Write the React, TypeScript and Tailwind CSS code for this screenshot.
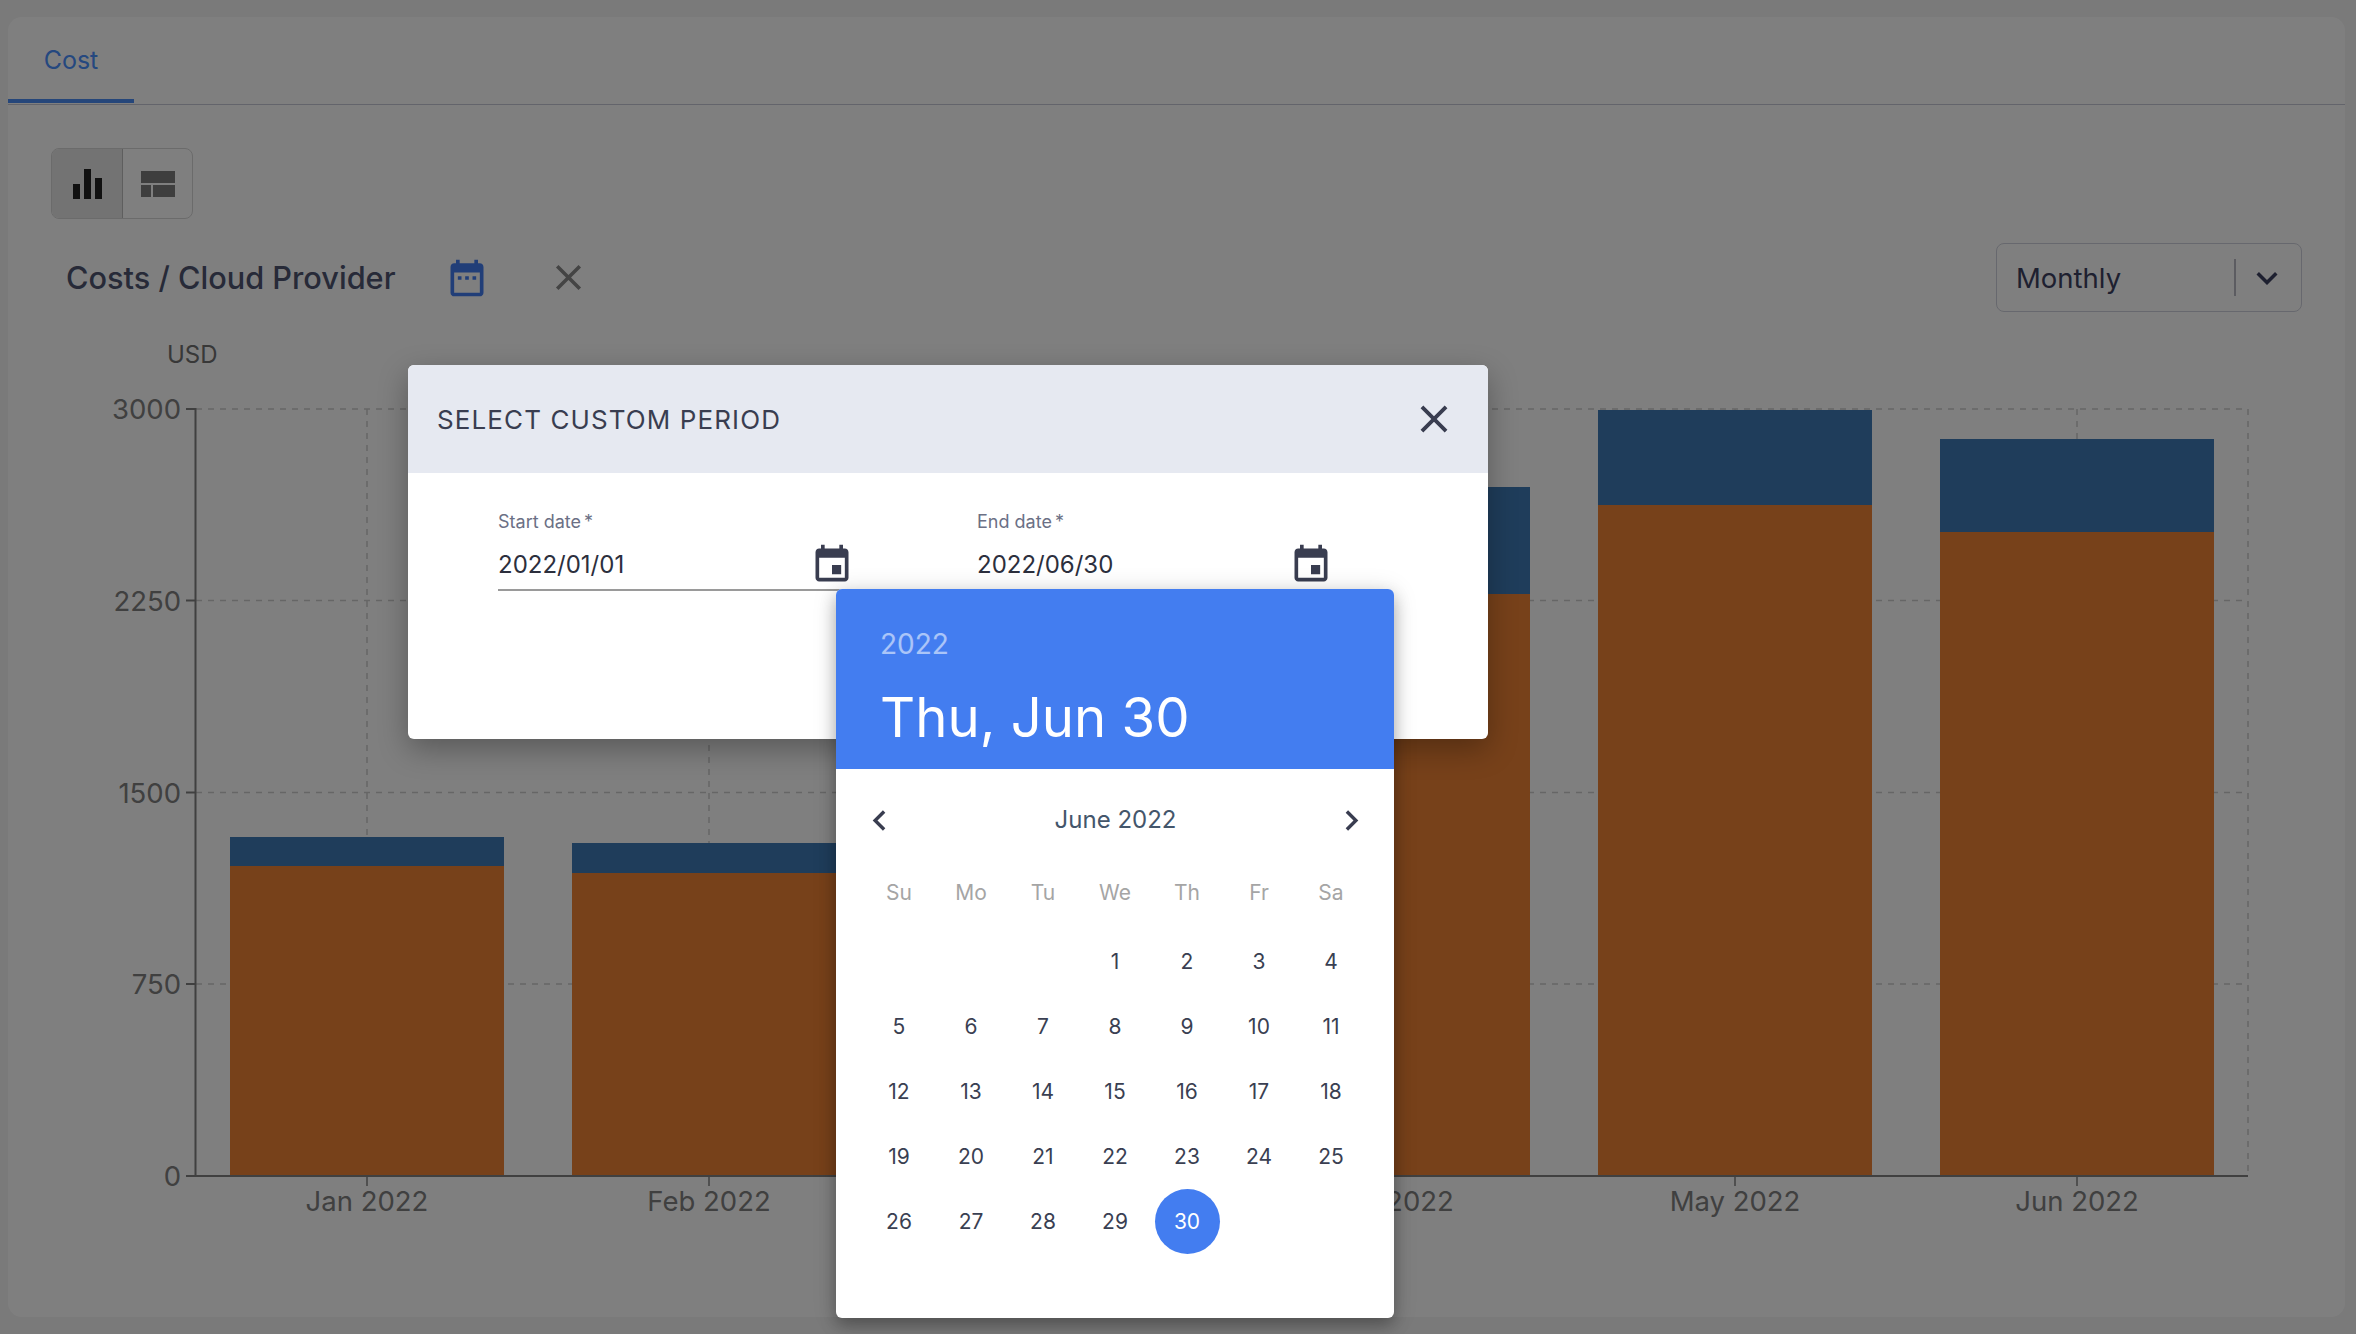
const FONT = "font-['Inter','Noto_Sans',sans-serif]";

const P = {
  range: "M9 11H7v2h2v-2zm4 0h-2v2h2v-2zm4 0h-2v2h2v-2zm2-7h-1V2h-2v2H8V2H6v2H5c-1.11 0-1.99.9-1.99 2L3 20c0 1.1.89 2 2 2h14c1.1 0 2-.9 2-2V6c0-1.1-.9-2-2-2zm0 16H5V9h14v11z",
  event: "M17 12h-5v5h5v-5zM16 1v2H8V1H6v2H5c-1.11 0-1.99.9-1.99 2L3 19c0 1.1.89 2 2 2h14c1.1 0 2-.9 2-2V5c0-1.1-.9-2-2-2h-1V1h-2zm3 18H5V8h14v11z",
  close: "M19 6.41L17.59 5 12 10.59 6.41 5 5 6.41 10.59 12 5 17.59 6.41 19 12 13.41 17.59 19 19 17.59 13.41 12z",
  left: "M15.41 7.41L14 6l-6 6 6 6 1.41-1.41L10.83 12z",
  right: "M10 6L8.59 7.41 13.17 12l-4.58 4.59L10 18l6-6z",
  down: "M16.59 8.59L12 13.17 7.41 8.59 6 10l6 6 6-6z",
};

function Icon({ d, className }: { d: string; className: string }) {
  return (
    <svg viewBox="0 0 24 24" fill="currentColor" className={className}>
      <path d={d} />
    </svg>
  );
}

const centers = [367, 709, 1051, 1393, 1735, 2077];
const months = ["Jan 2022", "Feb 2022", "", "Apr 2022", "May 2022", "Jun 2022"];
const bars = [
  { top: 837, mid: 866 },
  { top: 843, mid: 873 },
  { top: 700, mid: 760 },
  { top: 487, mid: 594 },
  { top: 410, mid: 505 },
  { top: 439, mid: 532 },
];
const yTicks = [
  { y: 409, t: "3000" },
  { y: 600.5, t: "2250" },
  { y: 792.5, t: "1500" },
  { y: 984, t: "750" },
  { y: 1176, t: "0" },
];

function Chart() {
  return (
    <svg viewBox="8 340 2337 880" width={2337} height={880} className="block">
      <text x={167} y={363} fontSize={24} fill="#707070">USD</text>
      {yTicks.slice(0, 4).map((g) => (
        <line key={g.y} x1={196} x2={2248} y1={g.y} y2={g.y} stroke="#cccccc" strokeWidth={1.5} strokeDasharray="6 6" />
      ))}
      {centers.map((c) => (
        <line key={c} x1={c} x2={c} y1={409} y2={1176} stroke="#cccccc" strokeWidth={1.5} strokeDasharray="6 6" />
      ))}
      <line x1={2248} x2={2248} y1={409} y2={1176} stroke="#cccccc" strokeWidth={1.5} strokeDasharray="6 6" />
      {bars.map((b, i) => (
        <g key={i}>
          <rect x={centers[i] - 137} y={b.top} width={274} height={b.mid - b.top} fill="#3e7ab6" />
          <rect x={centers[i] - 137} y={b.mid} width={274} height={1176 - b.mid} fill="#ee8234" />
        </g>
      ))}
      <line x1={195.5} x2={195.5} y1={408} y2={1177} stroke="#808080" strokeWidth={2} />
      <line x1={195} x2={2248} y1={1176} y2={1176} stroke="#808080" strokeWidth={2} />
      {yTicks.map((g) => (
        <g key={g.t}>
          <line x1={186} x2={196} y1={g.y} y2={g.y} stroke="#808080" strokeWidth={2} />
          <text x={181} y={g.y + 10} fontSize={27.5} textAnchor="end" fill="#808080">{g.t}</text>
        </g>
      ))}
      {centers.map((c, i) => (
        <g key={c}>
          <line x1={c} x2={c} y1={1176} y2={1186} stroke="#808080" strokeWidth={1.5} />
          {months[i] && (
            <text x={c} y={1211} fontSize={27.5} textAnchor="middle" fill="#808080">{months[i]}</text>
          )}
        </g>
      ))}
    </svg>
  );
}

function DateField({ label, value }: { label: string; value: string }) {
  return (
    <div className="w-[350px] mr-[129px] border-b-2 border-[#9a9a9a] h-[80px] relative">
      <div className="text-[18px] leading-[22px] text-[#6b7085]">
        {label}
        <span className="ml-[3px]">*</span>
      </div>
      <div className="mt-[17px] text-[24px] leading-[30px] text-[#2c2f3d]">{value}</div>
      <Icon d={P.event} className="absolute left-[312px] top-[32px] w-[44px] h-[44px] text-[#393d50]" />
    </div>
  );
}

const weekdays = ["Su", "Mo", "Tu", "We", "Th", "Fr", "Sa"];
const days: (number | null)[] = [null, null, null, ...Array.from({ length: 30 }, (_, i) => i + 1)];

function DatePicker() {
  return (
    <div className="absolute left-[836px] top-[589px] w-[558px] h-[729px] bg-white rounded-[6px] overflow-hidden shadow-[0_8px_16px_rgba(0,0,0,0.25),0_2px_24px_rgba(0,0,0,0.15)]">
      <div className="h-[180px] bg-[#437df0] pl-[44px] pt-[37px] text-white">
        <div className="text-[28px] leading-[36px] text-white/55">2022</div>
        <div className="mt-[19px] text-[54.5px] leading-[72px]">Thu, Jun 30</div>
      </div>
      <div className="flex items-center justify-between h-[40px] mt-[31px] pl-[23px] pr-[22px]">
        <Icon d={P.left} className="w-[41px] h-[41px] text-[#393d50]" />
        <div className="text-[24px] text-[#44566b]">June 2022</div>
        <Icon d={P.right} className="w-[41px] h-[41px] text-[#393d50]" />
      </div>
      <div className="grid grid-cols-7 px-[27px] mt-[33px]">
        {weekdays.map((w) => (
          <div key={w} className="h-[40px] flex items-center justify-center text-[21px] text-[#a5a5a5]">
            {w}
          </div>
        ))}
      </div>
      <div className="grid grid-cols-7 px-[27px] mt-[16px]">
        {days.map((d, i) => (
          <div key={i} className="h-[65px] flex items-center justify-center">
            {d !== null && (
              <div
                className={
                  d === 30
                    ? "w-[65px] h-[65px] rounded-full bg-[#437df0] text-white flex items-center justify-center text-[21px]"
                    : "text-[21px] text-[#3a3f52]"
                }
              >
                {d}
              </div>
            )}
          </div>
        ))}
      </div>
    </div>
  );
}

export default function App() {
  return (
    <div className={`relative w-[2356px] h-[1334px] overflow-hidden bg-[#f4f4f4] pl-[8px] pt-[17px] ${FONT}`}>
      <div className="w-[2337px] h-[1300px] bg-white rounded-[14px]">
        <div className="h-[88px] border-b border-[#c6c9d6] flex">
          <div className="w-[126px] h-[86px] border-b-4 border-[#4a8cf5] flex items-center justify-center pt-[5px] text-[25px] font-normal text-[#4a90ff]">
            Cost
          </div>
        </div>

        <div className="ml-[43px] mt-[43px] flex w-[142px] h-[71px] border border-[#d6d6d6] rounded-[8px] overflow-hidden">
          <div className="w-[71px] bg-[#e6e6e6] border-r border-[#bdbdbd] flex items-center justify-center">
            <svg viewBox="0 0 29 30" fill="currentColor" className="w-[29px] h-[30px] text-[#222222]">
              <path d="M0 15h7v15H0zM11 0h7v30h-7zM22 9h7v21h-7z" />
            </svg>
          </div>
          <div className="flex-1 flex flex-col justify-center pl-[18px] gap-[2px]">
            <div className="w-[34px] h-[12px] bg-[#7c7c7c]" />
            <div className="flex gap-[2px]">
              <div className="w-[10px] h-[12px] bg-[#7c7c7c]" />
              <div className="w-[22px] h-[12px] bg-[#7c7c7c]" />
            </div>
          </div>
        </div>

        <div className="mt-[24px] h-[69px] flex items-center pl-[58px] pr-[43px]">
          <div className="w-[329px] pt-[2px] text-[30.7px] font-medium text-[#4e5470] whitespace-nowrap">Costs / Cloud Provider</div>
          <Icon d={P.range} className="ml-[50px] w-[44px] h-[44px] text-[#437df0]" />
          <Icon d={P.close} className="ml-[58px] w-[43px] h-[43px] text-[#888888]" />
          <div className="ml-auto w-[306px] h-[69px] border border-[#cfd1dc] rounded-[8px] flex items-center pl-[19px]">
            <span className="pt-[2px] text-[27.5px] text-[#3d4160] w-[218px]">Monthly</span>
            <div className="w-[2px] h-[37px] bg-[#b8b9c2]" />
            <Icon d={P.down} className="ml-[10px] w-[42px] h-[42px] text-[#3d4160]" />
          </div>
        </div>

        <div className="mt-[28px]">
          <Chart />
        </div>
      </div>

      <div className="absolute inset-0 bg-black/50" />

      <div className="absolute left-[408px] top-[365px] w-[1080px] h-[374px] bg-white rounded-[6px] overflow-hidden shadow-[0_10px_30px_rgba(0,0,0,0.3)]">
        <div className="h-[108px] bg-[#e6e9f1] flex items-center justify-between pl-[29px] pr-[31px]">
          <div className="text-[26px] font-normal tracking-[1.1px] text-[#393d50]">SELECT CUSTOM PERIOD</div>
          <Icon d={P.close} className="w-[46px] h-[46px] text-[#393d50]" />
        </div>
        <div className="flex pl-[90px] pt-[38px]">
          <DateField label="Start date" value="2022/01/01" />
          <DateField label="End date" value="2022/06/30" />
        </div>
      </div>

      <DatePicker />
    </div>
  );
}
